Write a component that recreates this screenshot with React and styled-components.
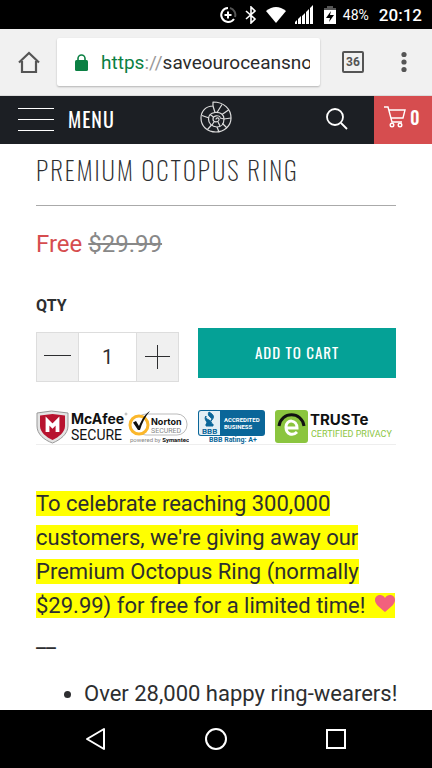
import React, { useState } from "react";
import styled, { createGlobalStyle } from "styled-components";

const condensed = `Oswald, "Roboto Condensed", "Open Sans Condensed", "Liberation Sans Narrow", Roboto, sans-serif`;

const GlobalStyle = createGlobalStyle`
  * { box-sizing: border-box; }
  body { margin: 0; background: #fff; color: #2d2e30; font-family: Roboto, sans-serif; }
  button, input { font: inherit; color: inherit; margin: 0; padding: 0; border: 0; border-radius: 0; background: none; }
  button { cursor: pointer; }
  svg { display: block; flex: none; }
`;

const Screen = styled.div`
  display: flex;
  flex-direction: column;
  height: 100vh;
`;

const StatusBar = styled.div`
  flex: none;
  display: flex;
  align-items: center;
  justify-content: flex-end;
  height: 29px;
  padding-right: 10px;
  background: #000;
  color: #fff;
`;

const StatusIcons = styled.div`
  display: flex;
  align-items: center;
  gap: 8px;
`;

const Battery = styled.span`
  margin: 0 10px 0 5px;
  font-size: 14px;
`;

const Clock = styled.span`
  font-size: 17px;
  font-weight: 500;
`;

const BrowserBar = styled.div`
  flex: none;
  display: flex;
  align-items: center;
  height: 67px;
  padding: 0 15px 0 16px;
  background: #f1f1f1;
  border-bottom: 1px solid #dcdcdc;
  color: #555;
`;

const IconButton = styled.button`
  display: flex;
  align-items: center;
  justify-content: center;
  width: 26px;
  height: 48px;
`;

const BrowserTools = styled.div`
  display: flex;
  gap: 25px;
`;

const AddressBox = styled.label`
  flex: 1;
  min-width: 0;
  display: flex;
  align-items: center;
  height: 48px;
  margin: 0 20px 0 15px;
  padding: 0 10px 0 18px;
  border-radius: 2px;
  background: #fff;
  box-shadow: 0 1px 2px rgba(0, 0, 0, 0.25);
  color: #2b2b2b;
  font-size: 19px;
`;

const Scheme = styled.span`
  margin-left: 13px;
  color: #0b8043;
`;

const Slashes = styled.span`
  color: #999;
`;

const AddressInput = styled.input`
  flex: 1;
  min-width: 0;
  outline: 0;
`;

const TabCount = styled.span`
  display: flex;
  align-items: center;
  justify-content: center;
  width: 22px;
  height: 22px;
  border: 2px solid #555;
  border-radius: 2px;
  font-size: 12px;
  font-weight: 700;
`;

const SiteHeader = styled.header`
  flex: none;
  display: grid;
  grid-template-columns: 1fr auto 1fr;
  align-items: stretch;
  height: 48px;
  background: #1c1f24;
  color: #fff;
  font-family: ${condensed};
`;

const MenuButton = styled.button`
  display: flex;
  align-items: center;
  gap: 14px;
  padding: 0 0 3px 18px;
  font-size: 20px;
  letter-spacing: 1px;
`;

const HomeLink = styled.a`
  display: flex;
  align-items: center;
  padding-bottom: 6px;
  color: #ddd;
`;

const HeaderTools = styled.div`
  display: flex;
  justify-content: flex-end;
  gap: 24px;
`;

const CartLink = styled.a`
  display: flex;
  align-items: center;
  gap: 4px;
  width: 58px;
  padding: 0 0 6px 9px;
  background: #d64d4f;
  color: #fff;
  font-size: 18px;
  font-weight: 500;
  text-decoration: none;
`;

const Product = styled.main`
  flex: 1;
  min-height: 0;
  overflow: hidden;
  padding: 8px 36px 0;
`;

const Title = styled.h1`
  margin: 0;
  padding-bottom: 17px;
  border-bottom: 1px solid #aaa;
  font-family: ${condensed};
  font-size: 25px;
  font-weight: 200;
  line-height: 36px;
  letter-spacing: 2px;
  white-space: nowrap;
`;

const Price = styled.p`
  margin: 22px 0 0;
  font-size: 24px;
  line-height: 32px;
  color: #d64d4f;
`;

const OldPrice = styled.s`
  color: #888;
`;

const QtyLabel = styled.label`
  display: block;
  margin-top: 36px;
  font-size: 16px;
  font-weight: 700;
  line-height: 20px;
`;

const BuyRow = styled.div`
  display: flex;
  align-items: flex-end;
  gap: 19px;
  margin-top: 12px;
`;

const Stepper = styled.div`
  display: flex;
  height: 50px;
  margin-top: 4px;
  border: 1px solid #ddd;
`;

const StepButton = styled.button`
  display: flex;
  align-items: center;
  justify-content: center;
  width: 41px;
  background: #f0f0f0;
`;

const QtyInput = styled.input`
  width: 59px;
  border: solid #ddd;
  border-width: 0 1px;
  text-align: center;
  font-size: 20px;
`;

const AddButton = styled.button`
  flex: 1;
  align-self: flex-start;
  height: 50px;
  padding-bottom: 3px;
  background: #05a196;
  color: #fff;
  font-family: ${condensed};
  font-size: 15px;
  letter-spacing: 1px;
`;

const Badges = styled.div`
  display: flex;
  align-items: flex-start;
  justify-content: space-between;
  height: 36px;
  margin-top: 27px;
  border-bottom: 1px solid #eee;
`;

const BadgePair = styled.div`
  display: flex;
`;

const Offer = styled.p`
  margin: 42px 0 0;
  font-size: 22px;
  line-height: 34px;
`;

const Mark = styled.mark`
  background: #ff0;
  color: inherit;
  svg { display: inline-block; margin-left: 4px; }
`;

const Divider = styled.p`
  margin: 0;
  font-size: 22px;
  line-height: 34px;
`;

const Perks = styled.ul`
  margin: 20px 0 0;
  padding-left: 48px;
  font-size: 22px;
  line-height: 34px;
  white-space: nowrap;
`;

const SystemNav = styled.nav`
  flex: none;
  display: flex;
  align-items: center;
  justify-content: center;
  gap: 94px;
  height: 58px;
  background: #000;
  color: #fff;
`;

const Stroke = ({ w, h, sw = 2, children, ...rest }) => (
  <svg width={w} height={h} viewBox={`0 0 ${w} ${h}`} fill="none" stroke="currentColor" strokeWidth={sw} {...rest}>
    {children}
  </svg>
);

const Shell = () => (
  <Stroke w={32} h={32} sw={1.2} strokeLinejoin="round">
    <path d="M13 1 C24 1 31 8 31 17 C31 25 24 31 16 31 C7 31 1 25 1 17 C1 10 6 5 13 5 Z" />
    <path d="M13 5 L15 11.500 C21 11 24 14 24 18 C24 23 21 26 17 26 C12 26 8.500 22.500 8.500 18 C8.500 14 11 12 15 11.500" />
    <path d="M16 18.500 C16 16 19.500 16.500 19 19 C18.500 21.500 13 22 13 18 C13 14 19 14 20.500 16.500" />
    <path d="M17 11.500 L22 3.500 M22 13.500 L28.500 9 M24 18 L31 17 M22.500 22.500 L27 27 M17 26 L19 31 M11.500 24 L7.500 28.500 M2 14.500 L9 17 M10 13.500 L13.500 16 M20 17 L24 18 M18 21 L20 25 M14 21 L12 24" />
  </Stroke>
);

const McAfee = () => (
  <svg width="92" height="35" viewBox="0 0 92 35" role="img" aria-label="McAfee Secure">
    <path d="M1 4 L15.500 2 L32 4 V17 C32 25 24 31 16.500 34 C8 31 1 25 1 17 Z" fill="#e4e4e4" stroke="#999" />
    <path d="M4 6.500 L16.500 5 L29 6.500 V17 C29 23 23 28 16.500 31 C10 28 4 23 4 17 Z" fill="#b8132f" />
    <path d="M11.500 23 V12 L16.500 17 L21.500 12 V23" fill="none" stroke="#fff" strokeWidth="3.800" />
    <text x="35" y="15" fontFamily="Inter" fontWeight="700" fontSize="14" fill="#111">McAfee</text>
    <text x="35" y="31" fontFamily="Roboto" fontSize="14" fill="#111">SECURE</text>
    <circle cx="90" cy="5" r="1" fill="none" stroke="#777" strokeWidth="0.500" />
  </svg>
);

const Norton = () => (
  <svg width="61" height="35" viewBox="0 0 61 35" role="img" aria-label="Norton Secured">
    <rect x="8" y="5" width="51" height="21" rx="10" fill="#fff" stroke="#bbb" />
    <circle cx="11" cy="16" r="9" fill="#fff" stroke="#fbb72b" strokeWidth="3" />
    <path d="M5 13.500 L8 12 L11 17 C14 10 17 5 22 2 C17 8 14 14 12 21 H10 Z" fill="#111" />
    <text x="23" y="16" fontFamily="Inter" fontWeight="700" fontSize="9" fill="#111">Norton</text>
    <text x="23" y="24" fontFamily="Roboto" fontSize="7" fill="#888">SECURED</text>
    <text x="2" y="33" fontFamily="Roboto" fontSize="6" fill="#888">powered by <tspan fill="#111" fontWeight="700">Symantec</tspan></text>
  </svg>
);

const Bbb = () => (
  <svg width="69" height="35" viewBox="0 0 69 35" role="img" aria-label="BBB Accredited Business">
    <rect x="1" y="1" width="67" height="26" rx="3" fill="#0a6699" />
    <path d="M4 2 H23 V26 H4 Q2 26 2 24 V4 Q2 2 4 2" fill="#e3eff5" />
    <path d="M12 3 C17 6 18 8 14 12 C17 8 9 8 12 3 M9 7 C7 11 17 11 14 15 H16 V17 H9 V15 C12 13 6 11 9 7" fill="#0a6699" stroke="#0a6699" />
    <text x="5" y="25" fontFamily="Roboto" fontWeight="700" fontSize="8" fill="#0a6699">BBB</text>
    <text x="27" y="13" fontFamily="Roboto" fontWeight="700" fontSize="6" fill="#fff">ACCREDITED</text>
    <text x="27" y="20" fontFamily="Roboto" fontWeight="700" fontSize="6" fill="#fff">BUSINESS</text>
    <text x="12" y="33" fontFamily="Roboto" fontWeight="700" fontSize="7" fill="#0a6699">BBB Rating: A+</text>
  </svg>
);

const Truste = () => (
  <svg width="122" height="35" viewBox="0 0 122 35" role="img" aria-label="TRUSTe Certified Privacy">
    <rect x="1" y="1" width="33" height="33" rx="3" fill="#8bc53f" />
    <path d="M5 17 C7 2 28 2 30 17" fill="none" stroke="#111" strokeWidth="3" />
    <path d="M12 19 H23 C23 10 12 10 12 18 C12 26 19 27 23 23" fill="none" stroke="#fff" strokeWidth="3" />
    <text x="36" y="16" fontFamily="Inter" fontWeight="700" fontSize="15" fill="#111">TRUSTe</text>
    <text x="37" y="28" fontFamily="Roboto" fontSize="9" fill="#8bc53f">CERTIFIED PRIVACY</text>
  </svg>
);

export default function App() {
  const [qty, setQty] = useState("1");
  const [address, setAddress] = useState("saveouroceansno");
  const step = (n) => setQty(String(Math.max(1, (Number(qty) || 1) + n)));

  return (
    <Screen>
      <GlobalStyle />
      <StatusBar>
        <StatusIcons>
          <Stroke w={18} h={18}>
            <path d="M9 2 A7 7 0 1 0 15 13" />
            <path d="M11 2 A7 7 0 0 1 16 11" stroke="#555" />
            <path d="M5.500 9 H12.500 M9 5.500 V12.500" />
          </Stroke>
          <Stroke w={12} h={18} sw={1.6}>
            <path d="M1 5 L10 13 L6 17 V1 L10 5 L1 13" />
          </Stroke>
          <svg width="22" height="18" viewBox="0 0 22 18" fill="#fff">
            <path d="M1 5 Q11 -3 21 5 L11 17 Z" />
          </svg>
          <svg width="19" height="19" viewBox="0 0 19 19" fill="#fff">
            <path d="M0 19 V17 L2 15 V19 Z M3 19 V14 L6 11 V19 Z M7 19 V11 L10 8 V19 Z M11 19 V7 L14 4 V19 Z M15 19 V3 L18 0 V19 Z" />
          </svg>
          <svg width="16" height="18" viewBox="0 0 16 18">
            <path d="M5 0 H11 V2 H14 V5 H2 V2 H5 Z" fill="#555" />
            <path d="M2 4 H14 V18 H2 Z" fill="#fff" />
            <path d="M9 5 L4 12 H8 L7 16 L12 9 H8 Z" fill="#000" />
          </svg>
        </StatusIcons>
        <Battery>48%</Battery>
        <Clock>20:12</Clock>
      </StatusBar>

      <BrowserBar>
        <IconButton aria-label="Home">
          <Stroke w={24} h={24} sw={2.2}>
            <path d="M2 12.500 L12 3 L22 12.500 M5 11 V22 H19 V11" />
          </Stroke>
        </IconButton>
        <AddressBox>
          <svg width="13" height="17" viewBox="0 0 13 17" aria-label="Secure">
            <rect y="6" width="13" height="11" rx="1.500" fill="#0b8043" />
            <path d="M3 7 V4.500 A3.500 3.500 0 0 1 10 4.500 V7" fill="none" stroke="#0b8043" strokeWidth="1.600" />
          </svg>
          <Scheme>https</Scheme>
          <Slashes>://</Slashes>
          <AddressInput aria-label="Address" value={address} onChange={(e) => setAddress(e.target.value)} />
        </AddressBox>
        <BrowserTools>
          <IconButton aria-label="36 open tabs"><TabCount>36</TabCount></IconButton>
          <IconButton aria-label="More options">
            <svg width="6" height="22" viewBox="0 0 6 22" fill="#555">
              <circle cx="3" cy="3.500" r="2.600" /><circle cx="3" cy="11" r="2.600" /><circle cx="3" cy="18.500" r="2.600" />
            </svg>
          </IconButton>
        </BrowserTools>
      </BrowserBar>

      <SiteHeader>
        <MenuButton>
          <Stroke w={36} h={24} sw={1}>
            <path d="M0 1.500 H36 M0 12.500 H36 M0 23.500 H36" />
          </Stroke>
          MENU
        </MenuButton>
        <HomeLink href="#" aria-label="Save Our Oceans"><Shell /></HomeLink>
        <HeaderTools>
          <IconButton aria-label="Search">
            <Stroke w={24} h={24} sw={1.8}>
              <circle cx="10" cy="9" r="8" />
              <path d="M16 15 L22 21" />
            </Stroke>
          </IconButton>
          <CartLink href="#cart" aria-label="Cart, 0 items">
            <Stroke w={23} h={22} sw={1.4}>
              <path d="M1 1 H5 L9 16 H19 M6 4 H22 L20 12 H8" />
              <circle cx="9" cy="19" r="1.800" /><circle cx="17" cy="19" r="1.800" />
            </Stroke>
            0
          </CartLink>
        </HeaderTools>
      </SiteHeader>

      <Product>
        <Title>PREMIUM OCTOPUS RING</Title>
        <Price>Free <OldPrice>$29.99</OldPrice></Price>
        <QtyLabel htmlFor="qty">QTY</QtyLabel>
        <BuyRow>
          <Stepper>
            <StepButton aria-label="Decrease quantity" onClick={() => step(-1)}>
              <Stroke w={27} h={27} sw={1}><path d="M0 11.500 H27" /></Stroke>
            </StepButton>
            <QtyInput id="qty" value={qty} onChange={(e) => setQty(e.target.value)} />
            <StepButton aria-label="Increase quantity" onClick={() => step(1)}>
              <Stroke w={25} h={25} sw={1}><path d="M0 11.500 H25 M12.500 0 V24" /></Stroke>
            </StepButton>
          </Stepper>
          <AddButton>ADD TO CART</AddButton>
        </BuyRow>
        <Badges>
          <BadgePair><McAfee /><Norton /></BadgePair>
          <Bbb />
          <Truste />
        </Badges>
        <Offer>
          <Mark>
            To celebrate reaching 300,000 customers, we're giving away our Premium Octopus Ring (normally $29.99) for free for a limited time!{" "}
            <svg width="20" height="18" viewBox="0 0 20 18" fill="#f2607d">
              <path d="M10 17 C4 12 0 9 0 5 C0 0 7 -2 10 3 C13 -2 20 0 20 5 C20 9 16 12 10 17 Z" />
            </svg>
          </Mark>
        </Offer>
        <Divider>__</Divider>
        <Perks><li>Over 28,000 happy ring-wearers!</li></Perks>
      </Product>

      <SystemNav>
        <IconButton aria-label="Back">
          <Stroke w={22} h={24} strokeLinejoin="round"><path d="M2 12 L19 2 V22 Z" /></Stroke>
        </IconButton>
        <IconButton aria-label="Home screen">
          <Stroke w={24} h={24}><circle cx="12" cy="12" r="10" /></Stroke>
        </IconButton>
        <IconButton aria-label="Recent apps">
          <Stroke w={22} h={22}><rect x="2" y="2" width="18" height="18" /></Stroke>
        </IconButton>
      </SystemNav>
    </Screen>
  );
}
